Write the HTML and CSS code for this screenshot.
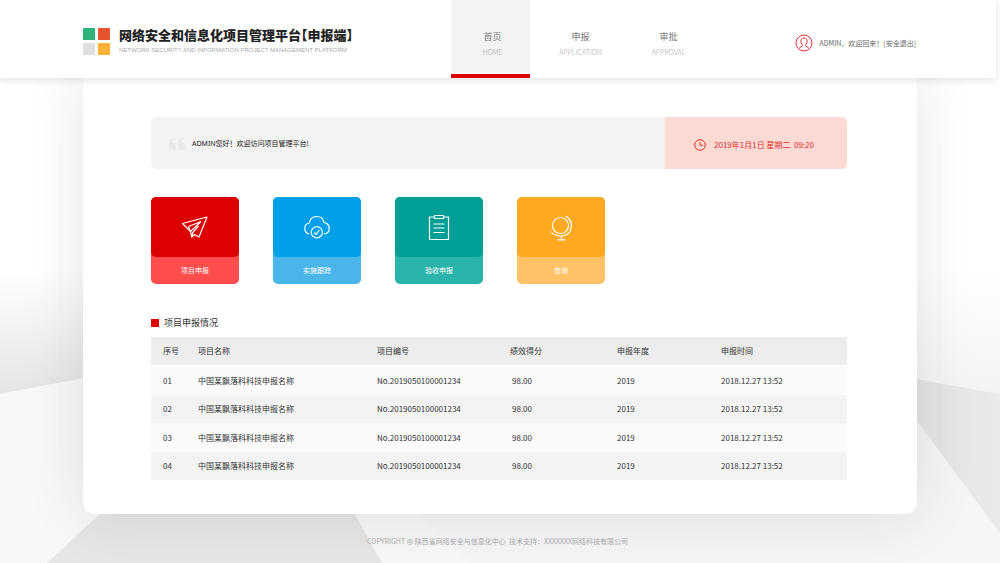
FILE: index.html
```
<!DOCTYPE html>
<html lang="zh-CN">
<head>
    <meta charset="UTF-8">
    <meta name="viewport" content="width=device-width, initial-scale=1.0">
    <title>网络安全和信息化项目管理平台</title>
    <link rel="stylesheet" href="styles.css">
</head>
<body>
    <!-- 背景 -->
    <svg class="backdrop" viewBox="0 0 1000 563" preserveAspectRatio="none" aria-hidden="true">
        <defs>
            <linearGradient id="wallLeft" x1="0" y1="0" x2="0" y2="1">
                <stop offset="0" stop-color="#fff"/>
                <stop offset="1" stop-color="#e4e4e4"/>
            </linearGradient>
            <linearGradient id="wallRight" x1="0" y1="0" x2="0" y2="1">
                <stop offset="0" stop-color="#fff"/>
                <stop offset="1" stop-color="#f3f3f3"/>
            </linearGradient>
            <linearGradient id="side" x1="0" y1="0" x2="1" y2="0">
                <stop offset="0" stop-color="#e3e3e3"/>
                <stop offset="1" stop-color="#e9e9e9"/>
            </linearGradient>
        </defs>
        <rect width="1000" height="563" fill="#fff"/>
        <path d="M0 270H500V300L0 394Z" fill="url(#wallLeft)"/>
        <path d="M500 270H1000V394L500 300Z" fill="url(#wallRight)"/>
        <path d="M0 394L500 300L1000 394V563H0Z" fill="#f8f8f9"/>
        <path d="M355 514H1000V563H382Z" fill="#f7f7f7"/>
        <path d="M418 514L470 563H1000V533L900 398Z" fill="#f5f5f7"/>
        <path d="M900 376L1000 394V533L900 398Z" fill="url(#side)"/>
        <path d="M115 500L47 563H382L347 500Z" fill="#e6e6e6"/>
    </svg>

    <header class="header">
        <div class="brand">
            <svg class="logo" viewBox="0 0 27 27" aria-hidden="true">
                <path fill="#2db27b" d="M0 0h12v12H0z"/>
                <path fill="#e6532d" d="M15 0h12v12H15z"/>
                <path fill="#dfdfdf" d="M0 15h12v12H0z"/>
                <path fill="#ffb136" d="M15 15h12v12H15z"/>
            </svg>
            <div class="brand-text">
                <h1 class="brand-name">网络安全和信息化项目管理平台【申报端】</h1>
                <p class="brand-sub">NETWORK SECURITY AND INFORMATION PROJECT MANAGEMENT PLATFORM</p>
            </div>
        </div>
        <nav class="nav">
            <a class="nav-item active" href="#">首页<span class="nav-en">HOME</span></a>
            <a class="nav-item" href="#">申报<span class="nav-en">APPLICATION</span></a>
            <a class="nav-item" href="#">审批<span class="nav-en">APPROVAL</span></a>
        </nav>
        <div class="user">
            <svg class="user-icon" viewBox="0 0 18 18" aria-hidden="true">
                <circle cx="9" cy="9" r="8"/>
                <path d="M4.300 14.300C4.500 12.800 7.500 12.800 7.500 11.700C7.500 10.700 5.900 9.500 5.900 7.200C5.900 5.200 7 4 9 4S12.100 5.200 12.100 7.200C12.100 9.500 10.500 10.700 10.500 11.700C10.500 12.800 13.500 12.800 13.700 14.300"/>
            </svg>
            <span>ADMIN，欢迎回来！<a class="logout" href="#">[安全退出]</a></span>
        </div>
    </header>

    <main class="panel">
        <section class="banner">
            <div class="welcome">
                <svg class="quote" viewBox="0 0 16 12" aria-hidden="true">
                    <path d="M7 0C4.500.5 3.500 2 3.500 5H7V12H0V6C0 2.500 2.500 0 7 0ZM16 0C13.500.5 12.500 2 12.500 5H16V12H9V6C9 2.500 11.500 0 16 0Z"/>
                </svg>
                <span>ADMIN您好！欢迎访问项目管理平台!</span>
            </div>
            <div class="clock">
                <svg class="clock-icon" viewBox="0 0 12 12" aria-hidden="true">
                    <circle cx="6" cy="6" r="5.300"/>
                    <path d="M6 2.800V6.300H8.800"/>
                </svg>
                <time datetime="2019-01-01T09:20">2019年1月1日 星期二&nbsp; 09:20</time>
            </div>
        </section>

        <section class="cards">
            <a class="card card-red" href="#">
                <span class="card-top">
                    <svg class="card-icon" viewBox="0 0 28 28" aria-hidden="true">
                        <path d="M1.500 9.500L26 3L18 23L13.500 20.500L10.800 23L9.500 17.500L1.500 9.500ZM9.500 17.500L7.500 12.500M9.500 17.500L20 7.500M7.500 12.500L20 7.500M10.800 23L11.800 18.500L17.500 12"/>
                    </svg>
                </span>
                <span class="card-label">项目申报</span>
            </a>
            <a class="card card-blue" href="#">
                <span class="card-top">
                    <svg class="card-icon" viewBox="0 0 28 28" aria-hidden="true">
                        <path d="M6.500 20C3.500 19.500 1.800 17.200 1.800 14.500C1.800 11.500 3.800 9.500 6.300 9C7 5 10 2.500 13.500 2.500C17.500 2.500 20.300 5 20.900 8.300C24.200 9 26.200 11.500 26.200 14.500C26.200 17.500 24.200 19.700 21 20"/>
                        <circle cx="13.800" cy="18.300" r="5.600"/>
                        <path d="M11.300 18.500L13 20.500L16.300 16"/>
                    </svg>
                </span>
                <span class="card-label">实施跟踪</span>
            </a>
            <a class="card card-teal" href="#">
                <span class="card-top">
                    <svg class="card-icon" viewBox="0 0 28 28" aria-hidden="true">
                        <path d="M9.500 3H4.500V25.500H23.500V3H18.500M9.500 1.500H18.500V4.500H9.500ZM8.500 10H19.500M8.500 14H19.500M8.500 18.500H19.500"/>
                    </svg>
                </span>
                <span class="card-label">验收申报</span>
            </a>
            <a class="card card-orange" href="#">
                <span class="card-top">
                    <svg class="card-icon" viewBox="0 0 28 28" aria-hidden="true">
                        <circle cx="13.500" cy="11.500" r="8"/>
                        <path d="M18.500 2C24 5 26 11 23.500 16.500C20 23.500 9 24 4 17.500M14.500 21.500V25.500M10.500 25.800H18.500"/>
                    </svg>
                </span>
                <span class="card-label">查询</span>
            </a>
        </section>

        <section>
            <h2 class="section-title">项目申报情况</h2>
            <table class="table">
                <colgroup>
                    <col class="col-no">
                    <col class="col-name">
                    <col class="col-code">
                    <col class="col-score">
                    <col class="col-year">
                    <col class="col-time">
                </colgroup>
                <thead>
                    <tr><th>序号</th><th>项目名称</th><th>项目编号</th><th>绩效得分</th><th>申报年度</th><th>申报时间</th></tr>
                </thead>
                <tbody>
                    <tr><td>01</td><td>中国某飘落科科技申报名称</td><td>No.2019050100001234</td><td class="score">98.00</td><td>2019</td><td>2018.12.27 13:52</td></tr>
                    <tr><td>02</td><td>中国某飘落科科技申报名称</td><td>No.2019050100001234</td><td class="score">98.00</td><td>2019</td><td>2018.12.27 13:52</td></tr>
                    <tr><td>03</td><td>中国某飘落科科技申报名称</td><td>No.2019050100001234</td><td class="score">98.00</td><td>2019</td><td>2018.12.27 13:52</td></tr>
                    <tr><td>04</td><td>中国某飘落科科技申报名称</td><td>No.2019050100001234</td><td class="score">98.00</td><td>2019</td><td>2018.12.27 13:52</td></tr>
                </tbody>
            </table>
        </section>
    </main>

    <footer class="footer">COPYRIGHT @ 陕西省网络安全与信息化中心&nbsp; 技术支持：XXXXXXX网络科技有限公司</footer>
</body>
</html>
```
FILE: styles.css
```
* {
    box-sizing: border-box;
}
body {
    position: relative;
    min-height: 100vh;
    margin: 0;
    font-family: "Noto Sans CJK SC", sans-serif;
    font-size: 8px;
    line-height: 12px;
    color: #333;
}
h1, h2, p {
    margin: 0;
}
a {
    color: inherit;
    text-decoration: none;
}
svg {
    display: block;
    flex: none;
}
.backdrop {
    position: absolute;
    top: 0;
    left: 0;
    z-index: -1;
    width: 100%;
    height: 100%;
}

/* 顶部 */
.header {
    position: relative;
    display: flex;
    align-items: stretch;
    height: 78px;
    margin-right: 4px;
    padding: 0 80px 0 83px;
    background-color: #fff;
    box-shadow: 0 2px 8px rgba(0, 0, 0, 0.12);
}
.brand {
    display: flex;
    flex: 0 0 368px;
    align-items: center;
    gap: 9px;
    padding-top: 5px;
}
.logo {
    width: 27px;
    height: 27px;
}
.brand-name {
    font-size: 13px;
    font-weight: 900;
    line-height: 16px;
    font-feature-settings: "halt";
    color: #222;
    white-space: nowrap;
}
.brand-sub {
    font-family: "Liberation Sans", Arial, sans-serif;
    font-size: 6px;
    line-height: 14px;
    color: #aaa;
    white-space: nowrap;
}
.nav {
    display: flex;
    gap: 9px;
}
.nav-item {
    display: flex;
    flex-direction: column;
    align-items: center;
    gap: 3px;
    width: 79px;
    padding: 31px 0 0 4px;
    font-size: 9px;
    color: #777;
}
.nav-item.active {
    background-color: #f3f3f3;
    border-bottom: 4px solid #d00;
}
.nav-en {
    font-size: 7px;
    font-weight: 300;
    color: #aaa;
}
.user {
    display: flex;
    align-items: center;
    gap: 6px;
    margin-left: auto;
    padding-top: 8px;
    font-size: 7px;
    color: #666;
    white-space: nowrap;
}
.user-icon {
    width: 18px;
    height: 18px;
    fill: none;
    stroke: #e53535;
    stroke-width: 1;
}

/* 内容面板 */
.panel {
    margin: 0 83px;
    padding: 39px 70px 34px 68px;
    background-color: #fff;
    border-radius: 0 0 12px 12px;
    box-shadow: 0 0 60px rgba(30, 30, 40, 0.12);
}
.banner {
    display: flex;
    height: 52px;
    border-radius: 5px;
    overflow: hidden;
}
.welcome {
    display: flex;
    flex: 1;
    align-items: center;
    gap: 7px;
    padding: 2px 0 0 18px;
    background-color: #f3f3f3;
    font-family: "Noto Sans", "Noto Sans CJK SC", sans-serif;
    font-size: 7px;
    color: #222;
}
.quote {
    width: 16px;
    height: 12px;
    fill: #e8e8e8;
}
.clock {
    display: flex;
    align-items: center;
    gap: 8px;
    width: 182px;
    padding: 3px 0 0 29px;
    background-color: #fedad4;
    color: #e02c2c;
}
.clock-icon {
    width: 12px;
    height: 12px;
    fill: none;
    stroke: #e02c2c;
    stroke-width: 1;
}

/* 快捷入口 */
.cards {
    display: flex;
    gap: 34px;
    margin: 28px 0 33px;
}
.card {
    width: 88px;
    border-radius: 5px;
    color: #fff;
}
.card-top {
    display: flex;
    align-items: center;
    justify-content: center;
    height: 60px;
    padding-top: 2px;
    border-radius: 5px;
}
.card-icon {
    width: 28px;
    height: 28px;
    fill: none;
    stroke: #fff;
    stroke-width: 1.2;
    stroke-linejoin: round;
}
.card-label {
    display: block;
    height: 27px;
    font-size: 7px;
    line-height: 26px;
    text-align: center;
}
.card-red {
    background-color: #ff4c4c;
}
.card-red .card-top {
    background-color: #d00;
}
.card-blue {
    background-color: #4ab5e8;
}
.card-blue .card-top {
    background-color: #00a0ea;
}
.card-teal {
    background-color: #2ab3aa;
}
.card-teal .card-top {
    background-color: #009f96;
}
.card-orange {
    background-color: #ffc266;
}
.card-orange .card-top {
    background-color: #ffa820;
}

/* 列表 */
.section-title {
    display: flex;
    align-items: center;
    gap: 5px;
    margin-bottom: 8px;
    font-size: 9px;
    font-weight: 400;
}
.section-title::before {
    content: "";
    width: 8px;
    height: 8px;
    background-color: #d00;
}
.table {
    width: 100%;
    table-layout: fixed;
    border-collapse: separate;
    border-spacing: 0;
    text-align: left;
}
.table th,
.table td {
    height: 28px;
    padding: 0;
    font-weight: 400;
}
.table th {
    height: 29px;
    background-color: #ededed;
    border-bottom: 1px solid #fff;
}
.table td {
    background-color: #f3f3f3;
}
.table tr:nth-child(odd) td {
    height: 29px;
    background-color: #fafafa;
}
.table th:first-child,
.table td:first-child {
    padding-left: 12px;
}
.table .score {
    padding-left: 2px;
}
.col-no {
    width: 47px;
}
.col-name {
    width: 179px;
}
.col-code {
    width: 133px;
}
.col-score {
    width: 107px;
}
.col-year {
    width: 104px;
}

.footer {
    padding: 21px 5px 16px 0;
    font-size: 7px;
    color: #aaa;
    text-align: center;
}
```
